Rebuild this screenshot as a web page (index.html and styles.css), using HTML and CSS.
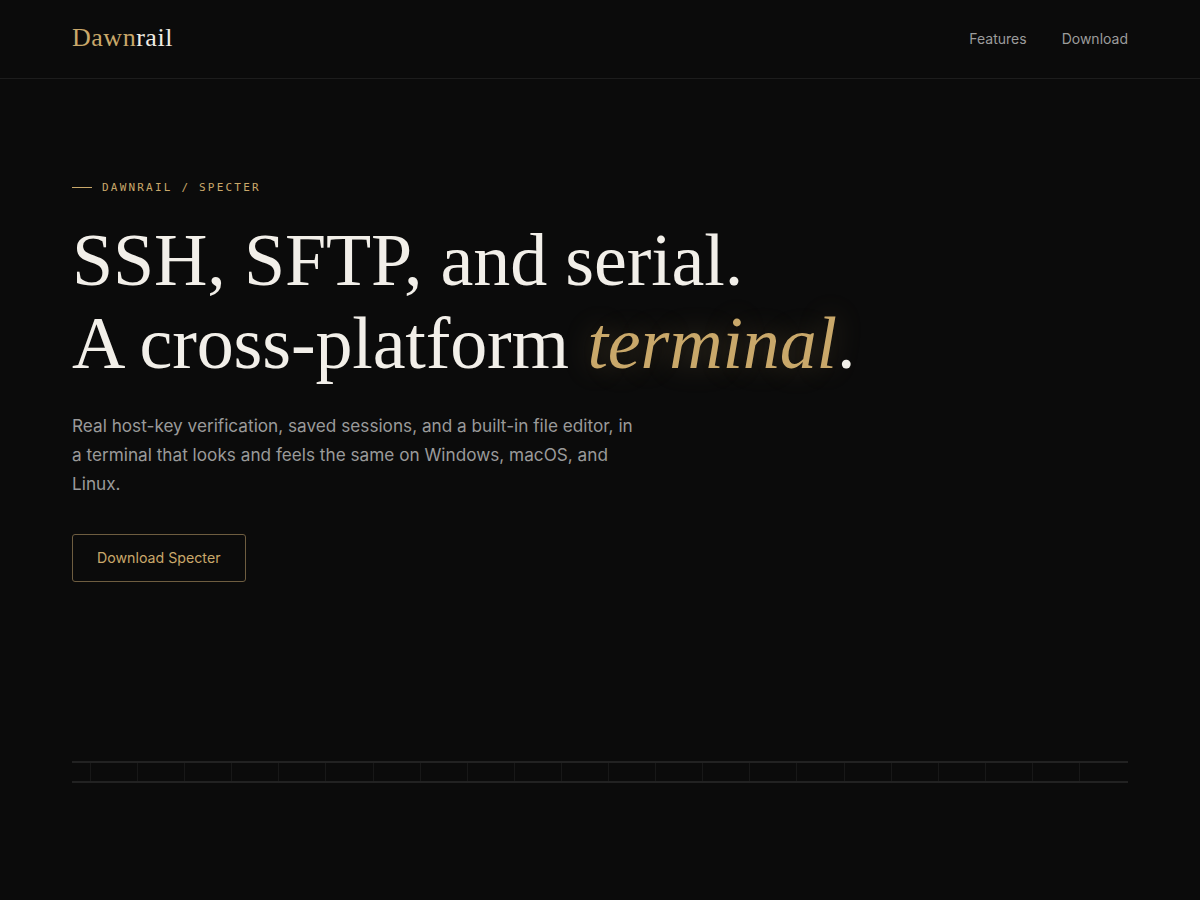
FILE: index.html
```html
<!DOCTYPE html>
<html lang="en">
<head>
<meta charset="utf-8">
<title>Dawnrail — Specter</title>
<link rel="stylesheet" href="styles.css">
</head>
<body>
<header class="site-header">
  <a class="logo" href="#"><span class="logo-dawn">Dawn</span><span class="logo-rail">rail</span></a>
  <nav class="nav">
    <a href="#features">Features</a>
    <a href="#download">Download</a>
  </nav>
</header>
<main>
  <section class="hero">
    <div class="eyebrow"><span class="eyebrow-line"></span><span>DAWNRAIL / SPECTER</span></div>
    <h1 class="title">SSH, SFTP, and serial.<br>A cross-platform <em>terminal</em>.</h1>
    <p class="lede">Real host-key verification, saved sessions, and a built-in file editor, in a terminal that looks and feels the same on Windows, macOS, and Linux.</p>
    <a class="btn" href="#download">Download Specter</a>
  </section>
  <div class="rail" aria-hidden="true"></div>
</main>
</body>
</html>
```

FILE: styles.css
```css
* { box-sizing: border-box; }
html, body { margin: 0; padding: 0; }
body {
  background: #0b0b0b;
  color: #ededed;
  font-family: Inter, "Noto Sans", sans-serif;
  min-height: 900px;
}
a { text-decoration: none; color: inherit; }

.site-header {
  height: 79px;
  padding: 0 72px;
  display: flex;
  align-items: center;
  justify-content: space-between;
  border-bottom: 1px solid #1d1d1d;
}
.logo {
  font-family: "Liberation Serif", "Times New Roman", serif;
  font-size: 26px;
  letter-spacing: 0.02em;
  margin-top: -2px;
}
.logo-dawn { color: #c9a86a; }
.logo-rail { color: #f0ece4; }
.nav { display: flex; gap: 35px; font-size: 14px; margin-top: -2px; }
.nav a { color: #9c9c9c; }

.hero {
  padding: 100px 72px 0;
}
.eyebrow {
  display: flex;
  align-items: center;
  gap: 10px;
  font-family: "DejaVu Sans Mono", "Liberation Mono", monospace;
  font-size: 11px;
  letter-spacing: 0.2em;
  color: #c9a86a;
  height: 16px;
}
.eyebrow-line { width: 20px; height: 1px; background: #c9a86a; }

.title {
  margin: 24px 0 0;
  font-family: "Liberation Serif", "Times New Roman", serif;
  font-weight: 400;
  font-size: 74px;
  line-height: 83px;
  letter-spacing: -0.002em;
  color: #f2efe9;
}
.title em {
  font-style: italic;
  color: #c9a86a;
  text-shadow: 0 0 28px rgba(201, 168, 106, 0.28);
}

.lede {
  margin: 26px 0 0;
  max-width: 568px;
  font-size: 17.2px;
  line-height: 29px;
  color: #9a9a9a;
}

.btn {
  display: inline-block;
  margin-top: 36px;
  padding: 15px 24px;
  border: 1px solid #6e5d40;
  border-radius: 3px;
  color: #c9a86a;
  font-size: 14.2px;
  line-height: 16px;
}

.rail {
  margin: 179px 72px 0;
  height: 22px;
  padding-right: 20px;
  border-top: 2px solid #222;
  border-bottom: 2px solid #222;
  background-clip: content-box;
  background-image: repeating-linear-gradient(to right, transparent 0, transparent 18px, #181818 18px, #181818 19px, transparent 19px, transparent 47.1px);
}
```
